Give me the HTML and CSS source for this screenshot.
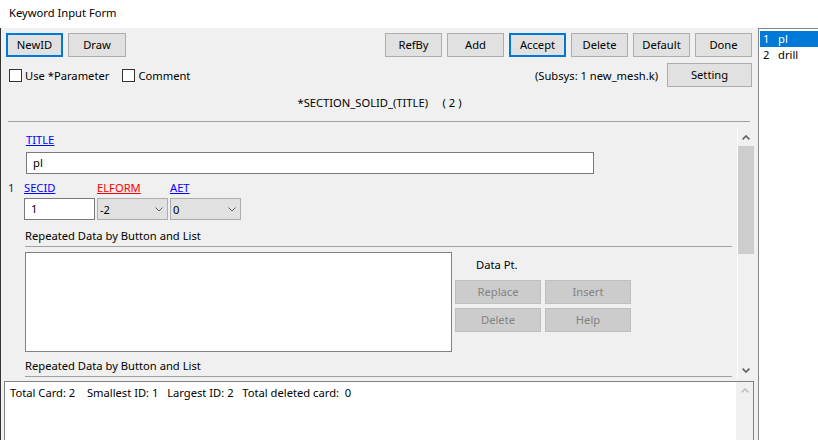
FILE: index.html
```html
<!DOCTYPE html>
<html>
<head>
<meta charset="utf-8">
<title>Keyword Input Form</title>
<link rel="stylesheet" href="styles.css">
</head>
<body>
<div class="window">
  <div class="titlebar">Keyword Input Form</div>
  <div class="body">
    <div class="main">
      <div class="toolbar">
        <div class="group">
          <button class="btn focus">NewID</button>
          <button class="btn wide">Draw</button>
        </div>
        <div class="group">
          <button class="btn">RefBy</button>
          <button class="btn">Add</button>
          <button class="btn focus">Accept</button>
          <button class="btn">Delete</button>
          <button class="btn">Default</button>
          <button class="btn">Done</button>
        </div>
      </div>
      <div class="optrow">
        <div class="checks">
          <label class="check"><span class="box"></span>Use *Parameter</label>
          <label class="check"><span class="box"></span>Comment</label>
        </div>
        <div class="subsys">
          <span>(Subsys: 1 new_mesh.k)</span>
          <button class="btn setting">Setting</button>
        </div>
      </div>
      <div class="heading">*SECTION_SOLID_(TITLE)     ( 2 )</div>
      <div class="sep"></div>
      <div class="scrollarea">
        <div class="content">
          <div class="title-label"><span class="link blue">TITLE</span></div>
          <div class="textbox title-input">pl</div>
          <div class="fields">
            <div class="rownum">1</div>
            <div class="flabel"><span class="link blue">SECID</span></div>
            <div class="flabel"><span class="link red">ELFORM</span></div>
            <div class="flabel"><span class="link blue">AET</span></div>
            <div></div>
            <div class="textbox field">1</div>
            <div class="select">
              <span>-2</span>
              <svg class="chev" width="8" height="5" viewBox="0 0 8 5"><path d="M0.5 0.5 L4 4 L7.5 0.5" fill="none" stroke="#606060" stroke-width="1"/></svg>
            </div>
            <div class="select">
              <span>0</span>
              <svg class="chev" width="8" height="5" viewBox="0 0 8 5"><path d="M0.5 0.5 L4 4 L7.5 0.5" fill="none" stroke="#606060" stroke-width="1"/></svg>
            </div>
          </div>
          <div class="rep-label">Repeated Data by Button and List</div>
          <div class="rep-line"></div>
          <div class="rep-body">
            <div class="listbox"></div>
            <div class="side">
              <div class="datapt">Data Pt.</div>
              <div class="dbtns">
                <button class="btn disabled">Replace</button>
                <button class="btn disabled">Insert</button>
                <button class="btn disabled">Delete</button>
                <button class="btn disabled">Help</button>
              </div>
            </div>
          </div>
          <div class="rep-label second">Repeated Data by Button and List</div>
          <div class="rep-line"></div>
        </div>
        <div class="vscroll">
          <div class="arrow">
            <svg width="8" height="5" viewBox="0 0 8 5"><path d="M0.6 4.4 L4 1 L7.4 4.4" fill="none" stroke="#606060" stroke-width="1.6"/></svg>
          </div>
          <div class="thumb"></div>
          <div class="track"></div>
          <div class="arrow">
            <svg width="8" height="5" viewBox="0 0 8 5"><path d="M0.6 0.6 L4 4 L7.4 0.6" fill="none" stroke="#606060" stroke-width="1.6"/></svg>
          </div>
        </div>
      </div>
      <div class="output">
        <div class="outtext">Total Card: 2    Smallest ID: 1   Largest ID: 2   Total deleted card:  0</div>
        <div class="vscroll inner">
          <div class="arrow">
            <svg width="8" height="5" viewBox="0 0 8 5"><path d="M0.6 4.4 L4 1 L7.4 4.4" fill="none" stroke="#c0c0c0" stroke-width="1.6"/></svg>
          </div>
        </div>
      </div>
    </div>
    <div class="list">
      <div class="item selected"><span class="num">1</span><span>pl</span></div>
      <div class="item"><span class="num">2</span><span>drill</span></div>
    </div>
  </div>
</div>
</body>
</html>
```

FILE: styles.css
```css
* { box-sizing: border-box; }
html, body { margin: 0; padding: 0; }
body {
  width: 818px;
  height: 440px;
  overflow: hidden;
  background: #ffffff;
  font-family: "Noto Sans", "Open Sans", sans-serif;
  font-size: 11.2px;
  color: #000;
}
.window { display: flex; flex-direction: column; height: 440px; }
.titlebar {
  height: 28px;
  padding-left: 9px;
  line-height: 26px;
  background: #fff;
}
.body { flex: 1; display: flex; min-height: 0; }
.main {
  width: 758px;
  flex: none;
  border-left: 1px solid #333;
  background: #f0f0f0;
  display: flex;
  flex-direction: column;
  min-height: 0;
  overflow: hidden;
}
.list {
  flex: 1;
  border-left: 1px solid #828790;
  border-top: 1px solid #828790;
  background: #fff;
  padding: 2px 0 0 1px;
}
.item { display: flex; height: 16px; line-height: 16px; padding-left: 3px; }
.item.selected { background: #0078d7; color: #fff; }
.num { width: 15px; }

.btn {
  font: inherit;
  height: 24px;
  width: 57px;
  background: #e1e1e1;
  border: 1px solid #adadad;
  padding: 0;
  margin: 0;
  color: #000;
  line-height: 20px;
  border-radius: 0;
}
.btn.wide { width: 58px; }
.btn.focus { border: 2px solid #0078d7; }
.btn.disabled { background: #cccccc; border-color: #bfbfbf; color: #838383; }

.toolbar {
  display: flex;
  justify-content: space-between;
  margin: 5px 6px 0 5px;
  height: 24px;
}
.group { display: flex; gap: 5px; }

.optrow {
  display: flex;
  justify-content: space-between;
  align-items: center;
  margin: 6px 6px 0 8px;
  height: 24px;
}
.checks { display: flex; gap: 13px; }
.check { display: flex; align-items: center; gap: 3px; }
.box { width: 13px; height: 13px; border: 1px solid #333; background: #fff; }
.subsys { display: flex; align-items: center; gap: 9px; }
.btn.setting { width: 85px; }

.heading {
  margin-top: 8px;
  height: 16px;
  line-height: 16px;
  text-align: center;
  white-space: pre;
}
.sep { margin: 10px 8px 0 7px; height: 1px; background: #a0a0a0; flex: none; }

.scrollarea {
  margin: 7px 4px 0 0;
  height: 250px;
  flex: none;
  display: flex;
}
.content { flex: 1; overflow: hidden; }
.vscroll {
  width: 17px;
  border-left: 1px solid #fff;
  background: #f0f0f0;
  display: flex;
  flex-direction: column;
}
.arrow { height: 17px; display: flex; align-items: center; justify-content: center; flex: none; }
.thumb { height: 108px; background: #cdcdcd; flex: none; }
.track { flex: 1; }

.link { text-decoration: underline; }
.blue { color: #0000ff; }
.red { color: #ff0000; }

.title-label { margin: 3px 0 0 25px; height: 16px; line-height: 16px; }
.textbox {
  background: #fff;
  border: 1px solid #7a7a7a;
  line-height: 20px;
}
.title-input { margin: 4px 0 0 25px; width: 568px; height: 22px; padding-left: 6px; }

.fields {
  margin-top: 6px;
  display: grid;
  grid-template-columns: 21px 71px 71px 71px;
  grid-template-rows: 16px 22px;
  column-gap: 2px;
  row-gap: 2px;
}
.rownum { padding-left: 7px; line-height: 16px; color: #3a1050; }
.flabel { line-height: 16px; }
.field { padding-left: 6px; }
.select {
  background: #e1e1e1;
  border: 1px solid #adadad;
  display: flex;
  align-items: center;
  justify-content: space-between;
  padding: 0 4px 0 2px;
}

.rep-label { margin-top: 8px; padding-left: 24px; height: 16px; line-height: 16px; }
.rep-label.second { margin-top: 6px; }
.rep-line { margin: 2px 5px 0 24px; height: 1px; background: #a0a0a0; }
.rep-body { margin-top: 5px; display: flex; }
.listbox { margin-left: 24px; width: 427px; height: 100px; border: 1px solid #828282; background: #fff; }
.side { margin-left: 3px; }
.datapt { margin-top: 5px; padding-left: 21px; height: 16px; line-height: 16px; }
.dbtns {
  margin-top: 7px;
  display: grid;
  grid-template-columns: 86px 86px;
  grid-auto-rows: 24px;
  gap: 4px;
}
.dbtns .btn { width: 86px; }

.output {
  margin: 2px 4px 0 3px;
  height: 70px;
  flex: none;
  border: 1px solid #828282;
  background: #fff;
  display: flex;
}
.outtext { flex: 1; padding: 3px 0 0 5px; white-space: pre; line-height: 16px; }
.vscroll.inner { border-left: none; }
```
